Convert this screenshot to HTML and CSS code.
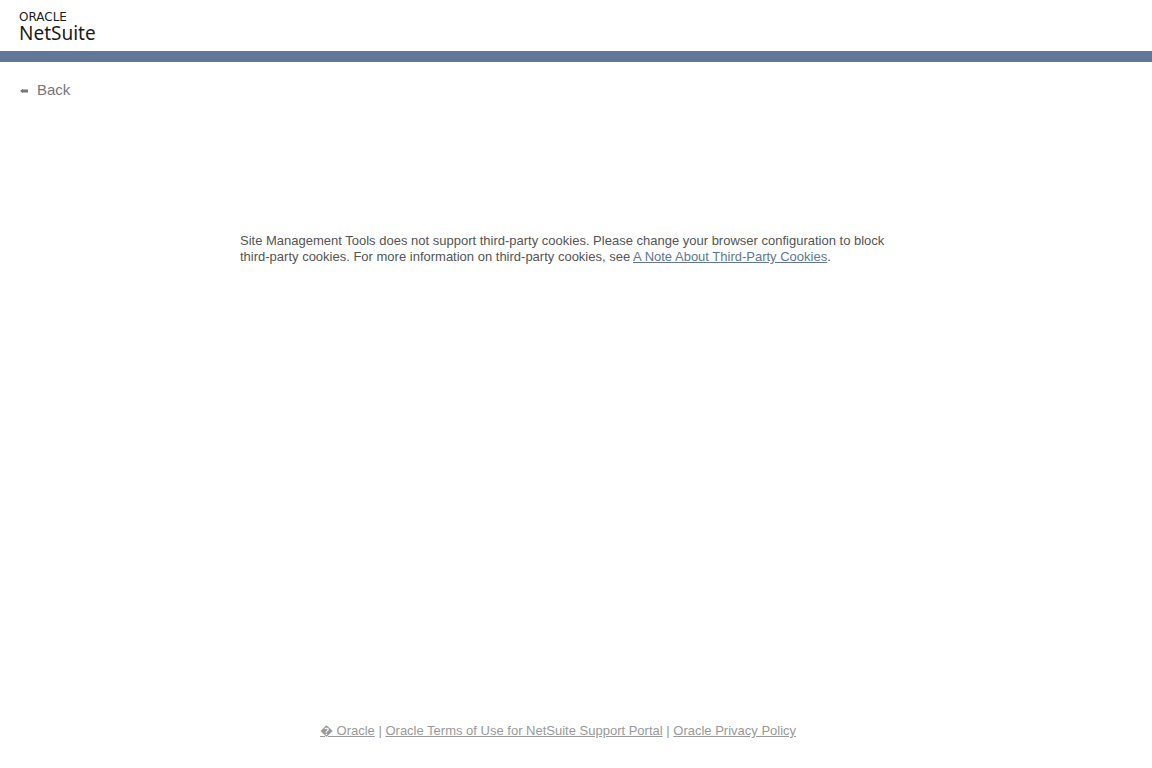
FILE: index.html
```html
<!DOCTYPE html>
<html lang="en">
<head>
<meta charset="utf-8">
<title>NetSuite</title>
<link rel="stylesheet" href="styles.css">
</head>
<body>
<header class="header">
  <div class="logo"><span class="logo-oracle">ORACLE</span><span class="logo-netsuite">NetSuite</span></div>
</header>
<nav class="nav">
  <a class="back" href="#"><svg class="back-icon" width="8" height="6" viewBox="0 0 8 6" aria-hidden="true"><path d="M0 3 3 .8V1.5H8V4.5H3V5.2Z" fill="currentColor"/></svg>Back</a>
</nav>
<main class="main">
  <p class="message">Site Management Tools does not support third-party cookies. Please change your browser configuration to block third-party cookies. For more information on third-party cookies, see <a class="message-link" href="#">A Note About Third-Party Cookies</a>.</p>
</main>
<footer class="footer">
  <a class="footer-link" href="#">&#xFFFD; Oracle</a> | <a class="footer-link" href="#">Oracle Terms of Use for NetSuite Support Portal</a> | <a class="footer-link" href="#">Oracle Privacy Policy</a>
</footer>
</body>
</html>
```
FILE: styles.css
```css
body {
  margin: 0;
  min-height: 100vh;
  display: flex;
  flex-direction: column;
  background: #fff;
  color: #545454;
  font: 13px/16px "Liberation Sans", Arial, sans-serif;
}
.header {
  padding: 11px 19px 8px;
  border-bottom: 11px solid #607799;
}
.logo {
  display: flex;
  flex-direction: column;
  color: #1b1b1b;
}
.logo-oracle {
  font: 12px/12px "DejaVu Sans", sans-serif;
}
.logo-netsuite {
  font: 400 19px/20px "Noto Sans", "Open Sans", sans-serif;
}
.nav {
  padding: 18px 20px;
}
.back {
  display: inline-flex;
  align-items: center;
  gap: 9px;
  color: #777;
  font-size: 15px;
  line-height: 20px;
  text-decoration: none;
}
.back-icon {
  margin-top: 2px;
}
.main {
  flex: 1;
  padding: 115px 240px 0;
}
.message {
  margin: 0;
}
.message-link {
  color: #607799;
}
.footer {
  padding: 0 36px 29px 0;
  color: #999;
  text-align: center;
}
.footer-link {
  color: #999;
}
```
